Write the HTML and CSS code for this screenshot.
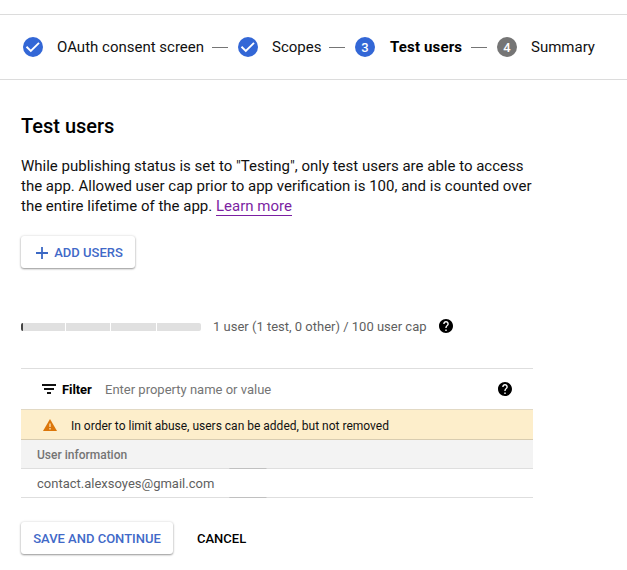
FILE: index.html
```html
<!DOCTYPE html>
<html lang="en">
<head>
<meta charset="utf-8">
<title>Test users</title>
<link rel="stylesheet" href="styles.css">
</head>
<body>
<nav class="stepper">
  <div class="step">
    <svg class="badge" viewBox="0 0 20 20"><circle cx="10" cy="10" r="10" fill="#3367d6"/><path d="M3.500 9.800l4.300 4.200L16 5.800" fill="none" stroke="#fff" stroke-width="1.9"/></svg>
    <span class="label w1">OAuth consent screen</span>
  </div>
  <i class="link"></i>
  <div class="step">
    <svg class="badge" viewBox="0 0 20 20"><circle cx="10" cy="10" r="10" fill="#3367d6"/><path d="M3.500 9.800l4.300 4.200L16 5.800" fill="none" stroke="#fff" stroke-width="1.9"/></svg>
    <span class="label w2">Scopes</span>
  </div>
  <i class="link"></i>
  <div class="step">
    <span class="badge number active">3</span>
    <span class="label w3 current">Test users</span>
  </div>
  <i class="link"></i>
  <div class="step">
    <span class="badge number">4</span>
    <span class="label">Summary</span>
  </div>
</nav>
<main>
  <h1>Test users</h1>
  <p class="intro">While publishing status is set to "Testing", only test users are able to access<br>the app. Allowed user cap prior to app verification is 100, and is counted over<br>the entire lifetime of the app. <a class="learn">Learn more</a></p>
  <button class="raised add"><svg width="12" height="12" viewBox="0 0 12 12"><path d="M6 0v12M0 6h12" stroke="#3b68c4" stroke-width="1.8"/></svg>ADD USERS</button>
  <div class="quota">
    <div class="meter"><i class="first"></i><i></i><i></i><i></i></div>
    <span class="count">1 user (1 test, 0 other) / 100 user cap</span>
    <svg class="help" viewBox="2 2 20 20"><path d="M12 2C6.480 2 2 6.480 2 12s4.480 10 10 10 10-4.480 10-10S17.520 2 12 2zm1 17h-2v-2h2v2zm2.070-7.750l-.9.920C13.450 12.900 13 13.500 13 15h-2v-.5c0-1.100.45-2.100 1.170-2.830l1.240-1.260c.37-.36.59-.86.59-1.410 0-1.100-.9-2-2-2s-2 .9-2 2H8c0-2.210 1.790-4 4-4s4 1.790 4 4c0 .88-.36 1.680-.93 2.250z"/></svg>
  </div>
  <section class="table">
    <div class="filter">
      <svg width="14" height="10" viewBox="0 0 14 10"><path d="M0 1h14M2 5h10M5 9h4" stroke="#111" stroke-width="1.8"/></svg>
      <b>Filter</b>
      <span class="hint">Enter property name or value</span>
      <svg class="help" viewBox="2 2 20 20"><path d="M12 2C6.480 2 2 6.480 2 12s4.480 10 10 10 10-4.480 10-10S17.520 2 12 2zm1 17h-2v-2h2v2zm2.070-7.750l-.9.920C13.450 12.900 13 13.500 13 15h-2v-.5c0-1.100.45-2.100 1.170-2.830l1.240-1.260c.37-.36.59-.86.59-1.410 0-1.100-.9-2-2-2s-2 .9-2 2H8c0-2.210 1.790-4 4-4s4 1.790 4 4c0 .88-.36 1.680-.93 2.250z"/></svg>
    </div>
    <div class="warning">
      <svg width="14" height="12" viewBox="0 0 14 12"><path d="M7 0l7 12H0z" fill="#dc7609"/><path d="M7 4.500v3.500M7 9v1.400" stroke="#fdeecb" stroke-width="1.200"/></svg>
      <span>In order to limit abuse, users can be added, but not removed</span>
    </div>
    <div class="row head">User information</div>
    <div class="row">contact.alexsoyes@gmail.com</div>
  </section>
  <div class="actions">
    <button class="raised save">SAVE AND CONTINUE</button>
    <button class="cancel">CANCEL</button>
  </div>
</main>
</body>
</html>
```
FILE: styles.css
```css
* { box-sizing: border-box; }
body { margin: 0; padding: 14px 0 16px; background: #fff; color: #111; font-family: Roboto, sans-serif; font-size: 13px; }
svg { display: block; flex: none; }
.stepper { display: flex; align-items: center; height: 66px; padding-left: 23px; border-top: 1px solid #dcdcdc; border-bottom: 1px solid #dcdcdc; font-size: 15px; white-space: nowrap; }
.step { display: flex; align-items: center; gap: 14px; }
.badge { width: 20px; height: 20px; flex: none; }
.number { border-radius: 50%; background: #757575; color: #fff; font-size: 13px; font-weight: 500; line-height: 21px; text-align: center; }
.active { background: #3367d6; }
.w1 { width: 147px; }
.w2 { width: 49px; }
.w3 { width: 73px; margin-left: 1px; }
.current { font-weight: 700; letter-spacing: .16px; color: #000; }
.link { width: 16px; height: 1px; margin: 1px 10px 0 8px; background: #757575; flex: none; }
main { width: 533px; padding-left: 21px; }
h1 { margin: 34px 0 0; font-size: 20px; line-height: 24px; font-weight: 500; color: #000; }
.intro { margin: 18px 0 0; font-size: 15px; line-height: 20px; white-space: nowrap; }
.learn { color: #7b1fa2; border-bottom: 1px solid #7b1fa2; }
button { border: 0; padding: 1px 0 0; background: #fff; font: 500 13px/32px Roboto, sans-serif; height: 32px; }
.raised { display: flex; align-items: center; justify-content: center; border-radius: 3px; color: #4169c8; box-shadow: 0 1px 2px rgba(0,0,0,.38), 0 0 3px rgba(0,0,0,.12); }
.add { width: 114px; gap: 6px; padding-left: 3px; margin-top: 20px; }
.quota { display: flex; align-items: center; height: 20px; margin-top: 48px; color: #5f5f5f; }
.meter { display: flex; gap: 1px; width: 180px; height: 8px; overflow: hidden; border-radius: 2px; margin-top: 1px; }
.meter i { flex: 1; background: #e0e0e0; }
.meter .first { flex: none; width: 44px; border-left: 2px solid #444; }
.count { width: 214px; margin-left: 12px; white-space: nowrap; }
.help { width: 14px; height: 14px; fill: #000; }
.quota .help { margin-left: 12px; }
.table { margin-top: 32px; border-top: 1px solid #dedede; }
.filter { display: flex; align-items: center; height: 40px; padding: 0 21px; }
.filter b { margin-left: 6px; width: 43px; font-weight: 700; letter-spacing: -.08px; color: #000; }
.hint { color: #757575; }
.filter .help { margin-left: auto; }
.warning { display: flex; align-items: center; height: 31px; padding: 0 0 0 22px; gap: 14px; background: #fdeecb; border-top: 1px solid #e2d9c4; border-bottom: 1px solid #d8ccb0; font-size: 12px; }
.warning span { padding-top: 2px; }
.row { height: 29px; padding-left: 16px; line-height: 29px; color: #5f5f5f; border-bottom: 1px solid; border-image: linear-gradient(90deg, #dedede 208px, #c0c0c0 209px, #c0c0c0 245px, #dedede 246px) 1; }
.head { padding-top: 1px; background: #f3f3f3; color: #757575; font-size: 12px; font-weight: 500; }
.actions { display: flex; gap: 24px; margin-top: 24px; }
.save { width: 152px; }
.cancel { color: #000; }
```
